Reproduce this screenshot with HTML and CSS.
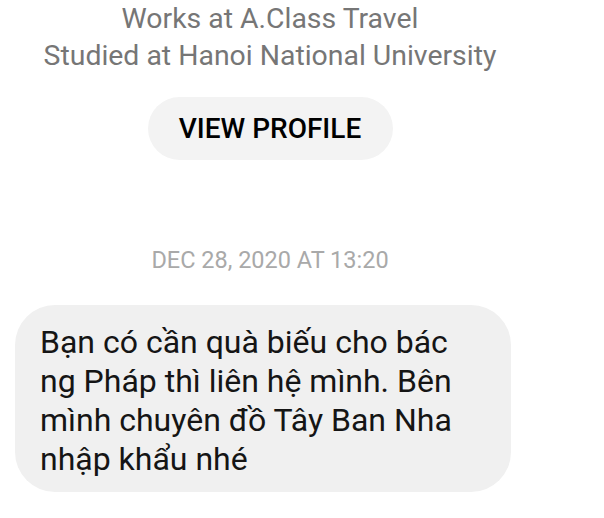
FILE: index.html
```html
<!DOCTYPE html>
<html lang="vi">
<head>
<meta charset="utf-8">
<link rel="stylesheet" href="styles.css">
</head>
<body>
<div class="page">
  <div class="profile">
    <div class="info">Works at A.Class Travel</div>
    <div class="info">Studied at Hanoi National University</div>
    <div class="btn">VIEW PROFILE</div>
  </div>
  <div class="date">DEC 28, 2020 AT 13:20</div>
  <div class="thread">
    <div class="bubble">Bạn có cần quà biếu cho bác ng Pháp thì liên hệ mình. Bên mình chuyên đồ Tây Ban Nha nhập khẩu nhé</div>
  </div>
</div>
</body>
</html>
```
FILE: styles.css
```css
html, body {
  margin: 0;
  padding: 0;
  background: #ffffff;
}
body {
  font-family: Roboto, "Liberation Sans", sans-serif;
  width: 604px;
  height: 518px;
  overflow: hidden;
}
.page {
  width: 540px;
  display: flex;
  flex-direction: column;
  align-items: center;
}
.profile {
  display: flex;
  flex-direction: column;
  align-items: center;
}
.info {
  font-size: 28.4px;
  line-height: 37px;
  color: #767676;
  white-space: nowrap;
}
.btn {
  margin-top: 23px;
  height: 63px;
  width: 245px;
  border-radius: 32px;
  background: #f3f3f3;
  color: #000;
  font-size: 28px;
  font-weight: 500;
  display: flex;
  align-items: center;
  justify-content: center;
}
.date {
  margin-top: 84px;
  font-size: 23.5px;
  line-height: 32px;
  color: #a9a9a9;
}
.thread {
  align-self: stretch;
  padding-left: 15px;
  margin-top: 29px;
}
.bubble {
  width: 496px;
  box-sizing: border-box;
  background: #f0f0f0;
  border-radius: 40px;
  padding: 18px 40px 13px 25px;
  font-size: 32px;
  line-height: 39px;
  color: #151515;
}
```
